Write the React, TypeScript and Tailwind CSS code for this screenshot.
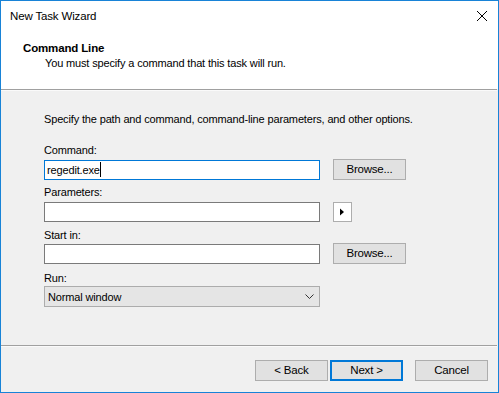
const font = { fontFamily: '"Liberation Sans", Arial, sans-serif' };

function WinButton({ label, primary }: { label: string; primary?: boolean }) {
  return (
    <button
      className={
        "w-[73px] h-[21px] bg-[#e1e1e1] text-[11.5px] tracking-[-0.2px] leading-none text-black flex items-center justify-center " +
        (primary ? "border-2 border-[#0078d7]" : "border border-[#adadad]")
      }
    >
      {label}
    </button>
  );
}

export default function App() {
  return (
    <div
      className="w-[499px] h-[393px] box-border border border-[#1883d7] bg-[#f0f0f0] flex flex-col text-black text-[11px] tracking-[-0.15px] leading-4"
      style={font}
    >
      {/* title bar */}
      <div className="h-[29px] bg-white flex items-center justify-between pl-[9px] pr-[9px]">
        <span className="text-[11.5px]">New Task Wizard</span>
        <svg width="12" height="12" viewBox="0 0 12 12" className="mr-[1px]">
          <path d="M1 1 L11 11 M11 1 L1 11" stroke="#000" strokeWidth="1" fill="none" />
        </svg>
      </div>

      {/* header */}
      <div className="h-[59px] bg-white pt-[10px]">
        <div className="pl-[22px] font-bold text-[11.5px]">Command Line</div>
        <div className="pl-[44px] mt-[-1px]">You must specify a command that this task will run.</div>
      </div>
      <div className="h-px bg-[#a0a0a0] mr-[1px]" />
      <div className="h-px bg-[#fafafa] mr-[1px]" />

      {/* body */}
      <div className="h-[254px] pl-[43px] pt-[20px]">
        <div>Specify the path and command, command-line parameters, and other options.</div>

        <div className="mt-[15px]">Command:</div>
        <div className="flex items-center mt-[1px] h-[21px]">
          <div className="w-[276px] h-[20px] bg-white border border-[#0078d7] flex items-center pl-[2px]">
            regedit.exe
            <span className="inline-block w-px h-[15px] bg-black" />
          </div>
          <div className="ml-[13px]">
            <WinButton label="Browse..." />
          </div>
        </div>

        <div className="mt-[4px]">Parameters:</div>
        <div className="flex items-center mt-[2px] h-[20px]">
          <div className="w-[276px] h-[20px] bg-white border border-[#7a7a7a]" />
          <div className="ml-[13px] w-[19px] h-[20px] bg-white border border-[#adadad] flex items-center justify-center">
            <svg width="6" height="8" viewBox="0 0 6 8" className="ml-[-2px]">
              <path d="M1 0.5 L5 4 L1 7.5 Z" fill="#000" />
            </svg>
          </div>
        </div>

        <div className="mt-[5px]">Start in:</div>
        <div className="flex items-center h-[21px]">
          <div className="w-[276px] h-[20px] bg-white border border-[#7a7a7a]" />
          <div className="ml-[13px]">
            <WinButton label="Browse..." />
          </div>
        </div>

        <div className="mt-[6px]">Run:</div>
        <div className="w-[276px] h-[21px] bg-[#e5e5e5] border border-[#acacac] flex items-center justify-between pl-[3px] pr-[5px]">
          <span>Normal window</span>
          <svg width="9" height="5" viewBox="0 0 9 5">
            <path d="M0.5 0.5 L4.5 4.5 L8.5 0.5" stroke="#333" strokeWidth="1" fill="none" />
          </svg>
        </div>
      </div>

      {/* footer */}
      <div className="h-px bg-[#a0a0a0] mr-[1px]" />
      <div className="h-px bg-[#fafafa] mr-[1px]" />
      <div className="flex justify-end pt-[13px] pr-[10px]">
        <WinButton label="< Back" />
        <div className="ml-[2px]">
          <WinButton label="Next >" primary />
        </div>
        <div className="ml-[12px]">
          <WinButton label="Cancel" />
        </div>
      </div>
    </div>
  );
}
